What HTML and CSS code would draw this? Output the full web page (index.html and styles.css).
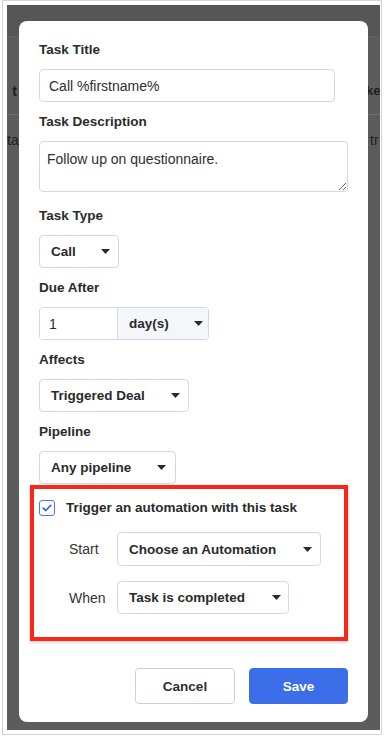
FILE: index.html
```html
<!DOCTYPE html>
<html lang="en">
<head>
<meta charset="utf-8">
<title>Task</title>
<link rel="stylesheet" href="styles.css">
</head>
<body>
<div class="frame">
  <div class="shot">
    <div class="bg-head"></div>
    <div class="bg-row bg-row-1">
      <div class="bg-left"><b>t</b></div>
      <div class="bg-right"><b>ke</b></div>
    </div>
    <div class="bg-row bg-row-2">
      <div class="bg-left2">ta</div>
      <div class="bg-right2">tr</div>
    </div>

    <div class="modal">
      <div class="field">
        <label class="label">Task Title</label>
        <input class="input input-title" type="text" value="Call %firstname%">
      </div>
      <div class="field field-ta">
        <label class="label">Task Description</label>
        <textarea class="textarea">Follow up on questionnaire.</textarea>
      </div>
      <div class="field">
        <label class="label">Task Type</label>
        <div class="select w-call"><span>Call</span><svg class="caret" width="9" height="5" viewBox="0 0 9 5"><path d="M0 0H9L4.5 5Z"/></svg></div>
      </div>
      <div class="field">
        <label class="label">Due After</label>
        <div class="group">
          <input class="num" type="text" value="1">
          <div class="addon"><span>day(s)</span><svg class="caret" width="9" height="5" viewBox="0 0 9 5"><path d="M0 0H9L4.5 5Z"/></svg></div>
        </div>
      </div>
      <div class="field">
        <label class="label">Affects</label>
        <div class="select w-affects"><span>Triggered Deal</span><svg class="caret" width="9" height="5" viewBox="0 0 9 5"><path d="M0 0H9L4.5 5Z"/></svg></div>
      </div>
      <div class="field field-last">
        <label class="label">Pipeline</label>
        <div class="select w-pipeline"><span>Any pipeline</span><svg class="caret" width="9" height="5" viewBox="0 0 9 5"><path d="M0 0H9L4.5 5Z"/></svg></div>
      </div>

      <div class="highlight">
        <div class="check-row">
          <span class="checkbox"><svg width="10" height="8" viewBox="0 0 10 8"><path d="M1.3 4.2L3.8 6.5L8.7 1.4" fill="none" stroke="#3c6de0" stroke-width="1.8" stroke-linecap="round" stroke-linejoin="round"/></svg></span>
          <span class="check-text">Trigger an automation with this task</span>
        </div>
        <div class="auto-row auto-start">
          <span class="auto-label">Start</span>
          <div class="select w-start"><span>Choose an Automation</span><svg class="caret" width="9" height="5" viewBox="0 0 9 5"><path d="M0 0H9L4.5 5Z"/></svg></div>
        </div>
        <div class="auto-row auto-when">
          <span class="auto-label">When</span>
          <div class="select w-when"><span>Task is completed</span><svg class="caret" width="9" height="5" viewBox="0 0 9 5"><path d="M0 0H9L4.5 5Z"/></svg></div>
        </div>
      </div>

      <div class="footer">
        <button class="btn btn-cancel" type="button">Cancel</button>
        <button class="btn btn-save" type="button">Save</button>
      </div>
    </div>
  </div>
</div>
</body>
</html>
```
FILE: styles.css
```css
* { box-sizing: border-box; }

body {
  margin: 0;
  background: #ffffff;
  font-family: "Liberation Sans", Arial, sans-serif;
  color: #2b2b2b;
}

.frame {
  margin-left: 2px;
  width: 380px;
  height: 735px;
  border: 1px solid #d4d4d4;
  padding: 4px 1px 4px 4px;
  background: #fff;
}

.shot {
  position: relative;
  width: 373px;
  height: 725px;
  background: #5c5c5c;
  overflow: hidden;
}

.bg-head {
  height: 32px;
  background: #565656;
  border-bottom: 1px solid #616161;
}

.bg-row {
  display: flex;
  justify-content: space-between;
  color: #1e1e1e;
  font-size: 14px;
  line-height: 18px;
  white-space: nowrap;
}

.bg-row-1 {
  height: 78px;
  padding-top: 45px;
  border-bottom: 1px solid #6e6e6e;
}

.bg-row-2 {
  padding-top: 16px;
}

.bg-left {
  width: 10px;
  display: flex;
  justify-content: flex-end;
}

.bg-right {
  width: 14px;
  font-size: 13px;
}

.bg-left2 {
  width: 12px;
}

.bg-right2 {
  width: 10px;
}

.modal {
  position: absolute;
  top: 16px;
  left: 12px;
  width: 349px;
  height: 701px;
  background: #ffffff;
  border-radius: 8px;
  padding: 20px 20px 17px 20px;
}

.field {
  display: flex;
  flex-direction: column;
  align-items: flex-start;
  gap: 10px;
  margin-bottom: 11px;
}

.field-ta { margin-bottom: 15px; }
.field-last { margin-bottom: 1px; }

.label {
  font-size: 13.5px;
  font-weight: bold;
  line-height: 18px;
  color: #2a2a2a;
}

.input {
  height: 33px;
  border: 1px solid #d3d7e6;
  border-radius: 4px;
  padding: 0 9px;
  font-family: inherit;
  font-size: 14px;
  color: #2e2e2e;
  outline: none;
}

.input-title { width: 296px; }

.textarea {
  display: block;
  width: 309px;
  height: 51px;
  border: 1px solid #d3d7e6;
  border-radius: 4px;
  padding: 8px 7px;
  font-family: inherit;
  font-size: 14px;
  line-height: 18px;
  color: #2e2e2e;
  resize: vertical;
  outline: none;
}

.select {
  display: flex;
  align-items: center;
  justify-content: space-between;
  height: 33px;
  border: 1px solid #d3d7e6;
  border-radius: 4px;
  padding: 0 8px 0 11px;
  font-size: 13.5px;
  font-weight: bold;
  color: #2a2a2a;
  background: #fff;
}

.caret { fill: #2a2a2a; flex: none; }

.w-call { width: 80px; }
.w-affects { width: 150px; }
.w-pipeline { width: 137px; padding-right: 9px; }
.w-start { width: 204px; height: 34px; }
.w-when { width: 172px; padding-right: 7px; }

.group {
  display: flex;
  width: 170px;
  height: 33px;
  border: 1px solid #d3d7e6;
  border-radius: 4px;
  overflow: hidden;
}

.num {
  width: 78px;
  border: none;
  border-right: 1px solid #d3d7e6;
  padding: 0 9px;
  font-family: inherit;
  font-size: 14px;
  color: #2e2e2e;
  outline: none;
}

.addon {
  flex: 1;
  display: flex;
  align-items: center;
  justify-content: space-between;
  padding: 0 5px 0 11px;
  background: #f5f6fa;
  font-size: 13.5px;
  font-weight: bold;
  color: #2a2a2a;
}

.highlight {
  margin-left: -9px;
  width: 318px;
  border: 4px solid #f5281a;
  padding: 10px 0 23px 5px;
  box-shadow: 0 1px 3px rgba(0, 0, 0, 0.25);
}

.check-row {
  display: flex;
  align-items: center;
  gap: 11px;
  height: 18px;
}

.checkbox {
  width: 16px;
  height: 16px;
  border: 1px solid #4a78e6;
  border-radius: 3px;
  display: flex;
  align-items: center;
  justify-content: center;
  background: #fff;
}

.check-text {
  font-size: 13.5px;
  font-weight: bold;
  line-height: 18px;
  color: #2a2a2a;
}

.auto-row {
  display: flex;
  align-items: center;
  padding-left: 30px;
  margin-top: 15px;
}

.auto-label {
  width: 48px;
  font-size: 14px;
  color: #333;
}

.footer {
  display: flex;
  justify-content: flex-end;
  gap: 14px;
  margin-top: 27px;
}

.btn {
  width: 100px;
  height: 36px;
  border-radius: 4px;
  font-family: inherit;
  font-size: 13.5px;
  font-weight: bold;
  cursor: pointer;
}

.btn-cancel {
  background: #fff;
  border: 1px solid #ccd1e0;
  color: #2e2e2e;
}

.btn-save {
  width: 99px;
  background: #3b6ee8;
  border: 1px solid #3b6ee8;
  color: #fff;
}
```
